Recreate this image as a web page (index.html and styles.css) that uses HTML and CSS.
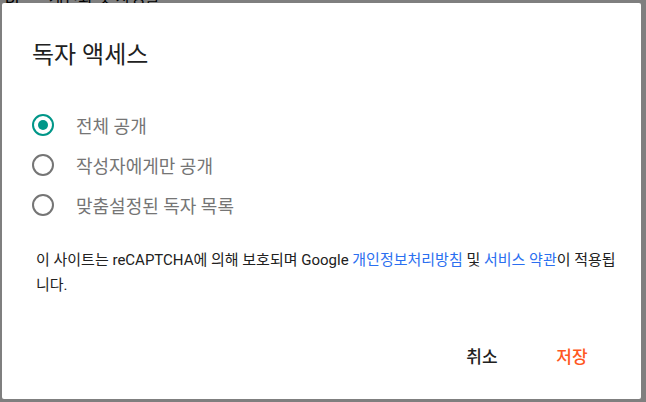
FILE: index.html
```html
<!DOCTYPE html>
<html lang="ko">
<head>
<meta charset="utf-8">
<title>독자 액세스</title>
<link rel="stylesheet" href="styles.css">
</head>
<body>
<div class="page">
  <p class="page-line"><span class="page-a">Bl</span><span class="page-b">개인화 및 사생활</span></p>
</div>
<div class="overlay"></div>
<div class="dialog" role="dialog" aria-labelledby="dlg-title">
  <h2 class="dialog-title" id="dlg-title">독자 액세스</h2>
  <div class="options">
    <label class="option">
      <span class="radio checked"><span class="dot"></span></span>
      <span class="option-label">전체 공개</span>
    </label>
    <label class="option">
      <span class="radio"></span>
      <span class="option-label">작성자에게만 공개</span>
    </label>
    <label class="option">
      <span class="radio"></span>
      <span class="option-label">맞춤설정된 독자 목록</span>
    </label>
  </div>
  <p class="notice">이 사이트는 reCAPTCHA에 의해 보호되며 Google <a class="link" href="#">개인정보처리방침</a> 및 <a class="link" href="#">서비스 약관</a>이 적용됩니다.</p>
  <div class="actions">
    <button class="btn btn-cancel" type="button">취소</button>
    <button class="btn btn-save" type="button">저장</button>
  </div>
</div>
</body>
</html>
```
FILE: styles.css
```css
html, body {
  margin: 0;
  padding: 0;
}
body {
  width: 646px;
  height: 402px;
  overflow: hidden;
  background: #ffffff;
  font-family: Roboto, "Noto Sans CJK KR", sans-serif;
}
.page {
  padding: 0 5px;
}
.page-line {
  margin: -12px 0 0 0;
  font-size: 16px;
  line-height: 20px;
  color: #000;
  display: flex;
  gap: 30px;
}
.overlay {
  position: fixed;
  inset: 0;
  background: rgba(0, 0, 0, 0.5);
}
.dialog {
  position: absolute;
  left: 2px;
  top: 3px;
  width: 639px;
  height: 396px;
  box-sizing: border-box;
  background: #ffffff;
  border-radius: 2px;
  padding: 0 24px 0 30px;
  display: flex;
  flex-direction: column;
}
.dialog-title {
  margin: 36px 0 0 0;
  font-size: 24px;
  line-height: 32px;
  font-weight: 400;
  color: #212121;
}
.options {
  margin-top: 34px;
  display: flex;
  flex-direction: column;
}
.option {
  height: 40px;
  display: flex;
  align-items: center;
  gap: 22px;
}
.radio {
  width: 22px;
  height: 22px;
  box-sizing: border-box;
  border: 2px solid #757575;
  border-radius: 50%;
  display: flex;
  align-items: center;
  justify-content: center;
  flex: none;
}
.radio.checked {
  border-color: #009688;
}
.dot {
  width: 10px;
  height: 10px;
  border-radius: 50%;
  background: #009688;
}
.option-label {
  font-size: 18px;
  color: #757575;
}
.notice {
  margin: 23px 0 0 4px;
  font-size: 15px;
  line-height: 25px;
  color: #212121;
}
.link {
  color: #2b6ff0;
  text-decoration: none;
}
.actions {
  margin-top: auto;
  margin-bottom: 26px;
  display: flex;
  justify-content: flex-end;
  gap: 16px;
  margin-right: 8px;
}
.btn {
  width: 74px;
  height: 36px;
  border: none;
  background: transparent;
  font-family: Roboto, "Noto Sans CJK KR", sans-serif;
  font-size: 17px;
  font-weight: 500;
  padding: 0;
  cursor: pointer;
}
.btn-cancel {
  color: #212121;
}
.btn-save {
  color: #ff5722;
}
```
